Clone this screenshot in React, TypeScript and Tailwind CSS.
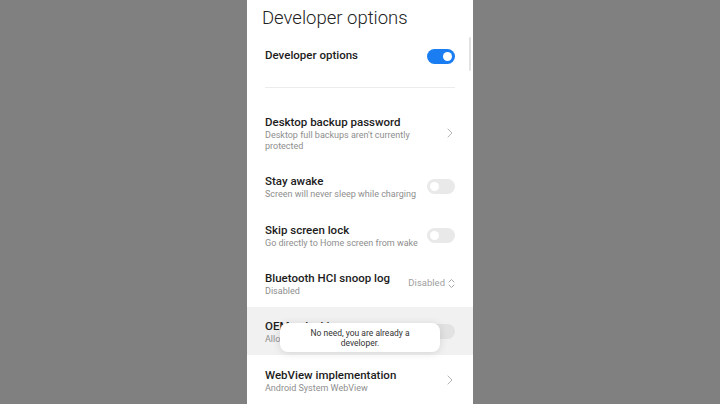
import React from "react";

function Toggle({ on }: { on?: boolean }) {
    return on ? (
        <div className="w-[28px] h-[15px] rounded-full bg-[#1a7ef2] flex items-center justify-end pr-[3px] shrink-0">
            <div className="w-[9px] h-[9px] rounded-full bg-white" />
        </div>
    ) : (
        <div className="w-[28px] h-[15px] rounded-full bg-[#e9e9e9] flex items-center pl-[3px] shrink-0">
            <div className="w-[9px] h-[9px] rounded-full bg-white" />
        </div>
    );
}

function Chevron() {
    return (
        <svg width="6" height="10" viewBox="0 0 6 10" className="shrink-0 mr-[2px]">
            <path d="M1 1 L5 5 L1 9" fill="none" stroke="#b5b5b5" strokeWidth="1" strokeLinecap="round" strokeLinejoin="round" />
        </svg>
    );
}

function Row({
    title,
    sub,
    right,
    h,
    className = "",
}: {
    title: string;
    sub?: string;
    right?: React.ReactNode;
    h: string;
    className?: string;
}) {
    return (
        <div className={`flex items-center justify-between px-[18px] ${h} ${className}`}>
            <div className="max-w-[158px]">
                <div className="text-[11.5px] leading-[16px] font-medium text-[#1c1c1c]">{title}</div>
                {sub && <div className="text-[9px] leading-[11px] text-[#8e8e8e]">{sub}</div>}
            </div>
            {right}
        </div>
    );
}

export default function App() {
    return (
        <div className="w-[720px] h-[404px] bg-[#808080] flex justify-center overflow-hidden font-['Roboto',sans-serif]">
            <div className="relative w-[226px] h-[404px] bg-white overflow-hidden">
                {/* scrollbar */}
                <div className="absolute right-[2px] top-[37px] w-[2px] h-[34px] rounded-full bg-[#e2e2e2]" />

                {/* Header */}
                <div className="h-[37px] flex items-center px-[15px]">
                    <h1 className="text-[18.5px] font-light text-[#222] leading-none">Developer options</h1>
                </div>

                <div className="h-[38px] flex items-center justify-between px-[18px]">
                    <span className="text-[11.5px] font-medium text-[#1c1c1c]">Developer options</span>
                    <Toggle on />
                </div>

                <div className="h-[28px] px-[18px] pt-[12px]">
                    <div className="h-px bg-[#ececec]" />
                </div>

                <Row
                    h="h-[59px]"
                    title="Desktop backup password"
                    sub="Desktop full backups aren't currently protected"
                    right={<Chevron />}
                />
                <Row h="h-[49px]" title="Stay awake" sub="Screen will never sleep while charging" right={<Toggle />} />
                <Row h="h-[48px]" title="Skip screen lock" sub="Go directly to Home screen from wake" right={<Toggle />} />
                <Row
                    h="h-[48px]"
                    title="Bluetooth HCI snoop log"
                    sub="Disabled"
                    right={
                        <div className="flex items-center gap-[3px] text-[9.5px] text-[#a0a0a0]">
                            <span>Disabled</span>
                            <svg width="7" height="11" viewBox="0 0 7 11">
                                <path d="M1 4 L3.5 1.5 L6 4 M1 7 L3.5 9.5 L6 7" fill="none" stroke="#a8a8a8" strokeWidth="1" strokeLinecap="round" strokeLinejoin="round" />
                            </svg>
                        </div>
                    }
                />
                <Row
                    h="h-[48px]"
                    className="bg-[#f1f1f1]"
                    title="OEM unlocking"
                    sub="Allow the bootloader to be unlocked"
                    right={<div className="w-[28px] h-[15px] rounded-full bg-[#e2e2e2]" />}
                />
                <Row h="h-[50px]" title="WebView implementation" sub="Android System WebView" right={<Chevron />} />

                {/* Toast */}
                <div className="absolute left-[33px] top-[323px] w-[160px] h-[29px] rounded-[8px] bg-white shadow-[0_1px_8px_rgba(0,0,0,0.12)] flex items-center justify-center text-center text-[8.5px] leading-[10px] text-[#333]">
                    No need, you are already a
                    <br />
                    developer.
                </div>
            </div>
        </div>
    );
}
